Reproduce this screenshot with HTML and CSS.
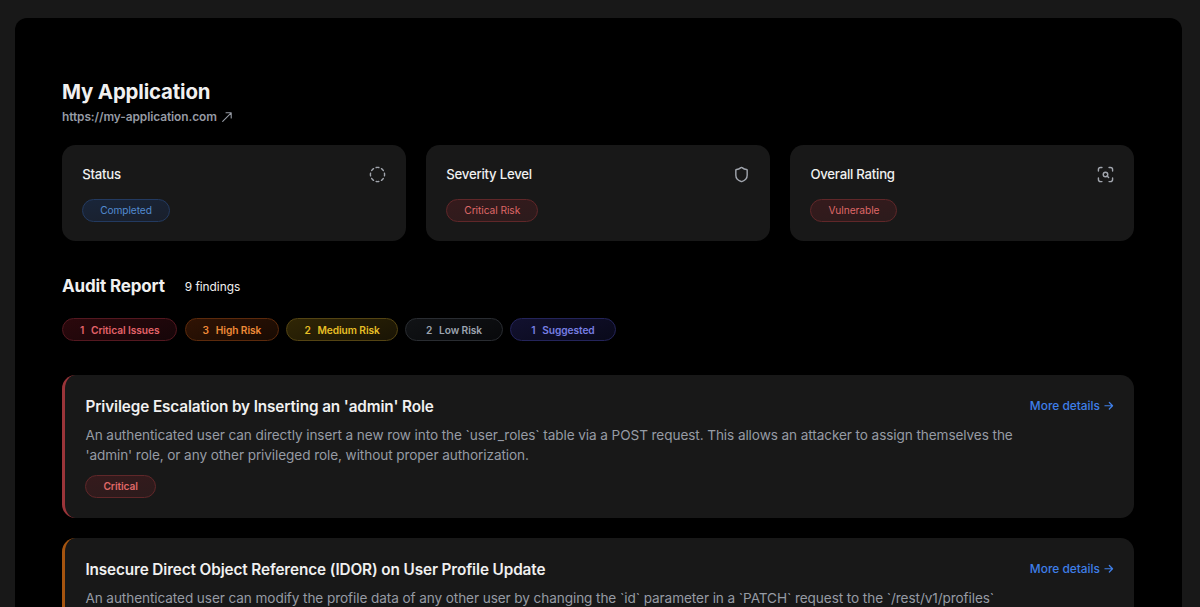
FILE: index.html
```html
<!DOCTYPE html>
<html lang="en">
<head>
<meta charset="utf-8">
<title>My Application – Audit Report</title>
<link rel="stylesheet" href="styles.css">
</head>
<body>
<main class="panel">
  <header class="app-header">
    <h1 class="app-title">My Application</h1>
    <a class="app-link"><span>https://my-application.com</span>
      <svg class="link-icon" viewBox="0 0 10 10"><path d="M.7 9.3 9.2.8M4 .8h5.2v5.2"/></svg></a>
  </header>

  <section class="stats">
    <article class="stat">
      <div class="stat-head"><h2 class="stat-title">Status</h2>
        <svg class="icon" viewBox="0 0 24 24"><path d="M10.1 2.18a9.93 9.93 0 0 1 3.8 0M17.6 3.71a9.95 9.95 0 0 1 2.69 2.7M21.82 10.1a9.93 9.93 0 0 1 0 3.8M20.29 17.6a9.95 9.95 0 0 1-2.7 2.69M13.9 21.82a9.94 9.94 0 0 1-3.8 0M6.4 20.29a9.95 9.95 0 0 1-2.69-2.7M2.18 13.9a9.93 9.93 0 0 1 0-3.8M3.71 6.4a9.95 9.95 0 0 1 2.7-2.69"/></svg></div>
      <span class="pill pill-blue">Completed</span>
    </article>
    <article class="stat">
      <div class="stat-head"><h2 class="stat-title">Severity Level</h2>
        <svg class="icon" viewBox="0 0 24 24"><path d="M20 13c0 5-3.5 7.5-7.66 8.95a1 1 0 0 1-.67-.01C7.5 20.5 4 18 4 13V6a1 1 0 0 1 1-1c2 0 4.5-1.2 6.24-2.72a1.17 1.17 0 0 1 1.52 0C14.51 3.81 17 5 19 5a1 1 0 0 1 1 1z"/></svg></div>
      <span class="pill pill-red">Critical Risk</span>
    </article>
    <article class="stat">
      <div class="stat-head"><h2 class="stat-title">Overall Rating</h2>
        <svg class="icon" viewBox="0 0 24 24"><path d="M2 7V5a3 3 0 0 1 3-3h2M17 2h2a3 3 0 0 1 3 3v2M22 17v2a3 3 0 0 1-3 3h-2M7 22H5a3 3 0 0 1-3-3v-2M16.4 16.4l-2.2-2.2"/><circle cx="12" cy="12" r="3.2"/></svg></div>
      <span class="pill pill-red">Vulnerable</span>
    </article>
  </section>

  <section class="report">
    <div class="report-head">
      <h2 class="report-title">Audit Report</h2>
      <span class="report-count">9 findings</span>
    </div>
    <div class="summary">
      <span class="pill tag tag-critical"><span>1</span><span>Critical Issues</span></span>
      <span class="pill tag tag-high"><span>3</span><span>High Risk</span></span>
      <span class="pill tag tag-medium"><span>2</span><span>Medium Risk</span></span>
      <span class="pill tag tag-wide tag-low"><span>2</span><span>Low Risk</span></span>
      <span class="pill tag tag-wide tag-suggested"><span>1</span><span>Suggested</span></span>
    </div>
    <div class="findings">
      <article class="finding finding-critical">
        <div class="finding-body">
          <h3 class="finding-title">Privilege Escalation by Inserting an 'admin' Role</h3>
          <p class="finding-text">An authenticated user can directly insert a new row into the `user_roles` table via a POST request. This allows an attacker to assign themselves the<br>'admin' role, or any other privileged role, without proper authorization.</p>
          <span class="pill tag pill-red">Critical</span>
        </div>
        <a class="details"><span>More details</span><svg class="arrow" viewBox="0 0 10 10"><path d="M1 5h8M5.6 1.6 9 5 5.6 8.4"/></svg></a>
      </article>
      <article class="finding finding-high">
        <div class="finding-body">
          <h3 class="finding-title">Insecure Direct Object Reference (IDOR) on User Profile Update</h3>
          <p class="finding-text">An authenticated user can modify the profile data of any other user by changing the `id` parameter in a `PATCH` request to the `/rest/v1/profiles`</p>
        </div>
        <a class="details"><span>More details</span><svg class="arrow" viewBox="0 0 10 10"><path d="M1 5h8M5.6 1.6 9 5 5.6 8.4"/></svg></a>
      </article>
    </div>
  </section>
</main>
</body>
</html>
```
FILE: styles.css
```css
* { box-sizing: border-box; }
body {
  margin: 0;
  height: 607px;
  overflow: hidden;
  padding: 18px 18.5px 0 14.5px;
  background: #181818;
  color: #f0f0f0;
  font-family: Inter, "Liberation Sans", sans-serif;
}
h1, h2, h3, p { margin: 0; }
svg { fill: none; stroke: currentColor; stroke-linecap: round; stroke-linejoin: round; display: block; flex: none; }

.panel {
  height: 589px;
  overflow: hidden;
  padding: 60px 47.6px 0 47.5px;
  border-radius: 12px 12px 0 0;
  background: #000;
}
.app-header { height: 67.4px; }
.app-title { font-size: 20.4px; line-height: 27px; font-weight: 700; letter-spacing: -0.16px; }
.app-link {
  display: flex;
  align-items: center;
  gap: 5.4px;
  font-size: 11.9px;
  line-height: 17px;
  margin-top: 3px;
  font-weight: 600;
  letter-spacing: -0.08px;
  color: #969ba4;
}
.link-icon { width: 10px; height: 10px; stroke-width: 1.1; }

.stats { display: grid; grid-template-columns: repeat(3, 1fr); gap: 20.4px; }
.stat {
  height: 96px;
  padding: 20.6px 20.2px;
  border-radius: 13.6px;
  background: #181818;
}
.stat-head { display: flex; justify-content: space-between; height: 33px; }
.stat-title { font-size: 13.2px; line-height: 17px; font-weight: 500; letter-spacing: -0.24px; }
.icon { width: 17px; height: 17px; margin-right: -0.4px; stroke-width: 2; color: #a1a5ad; }

.pill {
  display: flex;
  align-items: center;
  width: fit-content;
  height: 23px;
  padding: 0 17px;
  border: 1px solid;
  border-radius: 12px;
  font-size: 10.2px;
  line-height: 14px;
  font-weight: 400;
  letter-spacing: -0.06px;
  white-space: nowrap;
}
.tag { gap: 6.8px; font-weight: 600; letter-spacing: -0.08px; }
.tag-wide { padding: 0 20px; }
.pill-blue { letter-spacing: -0.1px; color: #528ad0; border-color: #233a60; background: linear-gradient(170deg, #192539, #191f2b); }
.pill-red { color: #df6767; border-color: #602729; background: linear-gradient(170deg, #351a1c, #2c1b1c); }
.tag-critical { color: #e26269; border-color: #541820; background: linear-gradient(160deg, #2b080c, #160609); }
.tag-high { color: #ee8a38; border-color: #5c2a0c; background: linear-gradient(160deg, #301304, #180b03); }
.tag-medium { color: #e6bf25; border-color: #544413; background: linear-gradient(160deg, #302605, #191405); }
.tag-low { color: #9ca3af; border-color: #292c31; background: linear-gradient(160deg, #111316, #08090b); }
.tag-suggested { color: #767ee2; border-color: #24245a; background: linear-gradient(160deg, #12112f, #09091a); }

.report { padding-top: 34.6px; }
.report-head { display: flex; align-items: center; gap: 20px; height: 21px; }
.report-title { font-size: 17px; line-height: 21px; font-weight: 700; letter-spacing: -0.15px; }
.report-count { font-size: 11.9px; line-height: 21px; letter-spacing: -0.04px; }
.summary { display: flex; gap: 7.2px; margin-top: 21.2px; }
.findings { display: grid; gap: 20.4px; margin-top: 33.8px; }
.finding {
  display: flex;
  justify-content: space-between;
  height: 142.8px;
  padding: 20.4px 20.4px 0;
  border-left: 3.4px solid;
  border-radius: 13.6px;
  background: #181818;
}
.finding-critical { border-color: #9a3439; }
.finding-high { border-color: #a5540f; }
.finding-title { font-size: 15.3px; line-height: 22px; font-weight: 600; letter-spacing: -0.11px; }
.finding-text {
  margin: 7px 0 9.6px;
  font-size: 13.6px;
  line-height: 20.2px;
  letter-spacing: -0.09px;
  color: #969ba4;
  white-space: nowrap;
}
.finding-body { padding-top: 0.5px; }
.details {
  display: flex;
  align-items: center;
  gap: 4px;
  height: 20px;
  font-size: 11.9px;
  font-weight: 500;
  color: #3f7fe8;
  white-space: nowrap;
}
.arrow { width: 9.5px; height: 9.5px; stroke-width: 1.3; }
```
